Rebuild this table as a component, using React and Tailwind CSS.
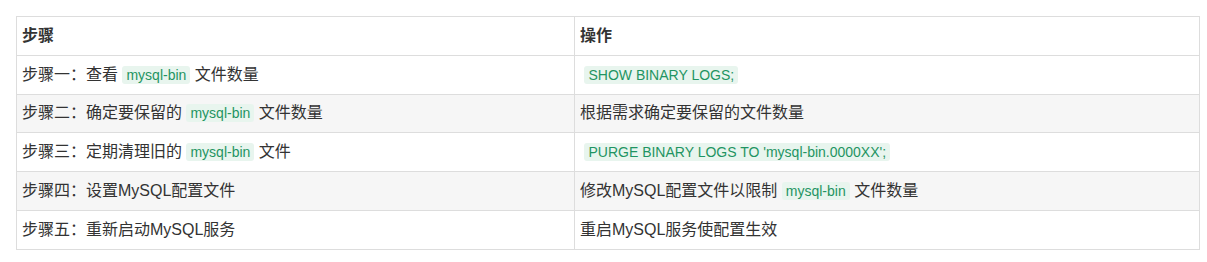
import React from "react";

const C = ({ children }) => (
  <code className="rounded-[3px] bg-[#e8f5ee] px-[4px] py-[1px] text-[14px] text-[#1f9462] [font-family:'Liberation_Sans',Arial,sans-serif]">
    {children}
  </code>
);

const rows = [
  [<>步骤一：查看 <C>mysql-bin</C> 文件数量</>, <> <C>SHOW BINARY LOGS;</C></>],
  [<>步骤二：确定要保留的 <C>mysql-bin</C> 文件数量</>, <>根据需求确定要保留的文件数量</>],
  [<>步骤三：定期清理旧的 <C>mysql-bin</C> 文件</>, <> <C>PURGE BINARY LOGS TO 'mysql-bin.0000XX';</C></>],
  [<>步骤四：设置MySQL配置文件</>, <>修改MySQL配置文件以限制 <C>mysql-bin</C> 文件数量</>],
  [<>步骤五：重新启动MySQL服务</>, <>重启MySQL服务使配置生效</>],
];

export default function App() {
  return (
    <div className="h-[262px] w-[1207px] bg-white pl-[16px] pt-[16px] [font-family:'Liberation_Sans','Noto_Sans_CJK_SC',sans-serif] text-[16px] text-[#333]">
      <table className="w-[1184px] table-fixed border-collapse">
        <colgroup>
          <col className="w-[558px]" />
          <col />
        </colgroup>
        <thead>
          <tr className="h-[38.8px]">
            <th className="border border-[#ddd] px-[5px] text-left font-bold">步骤</th>
            <th className="border border-[#ddd] px-[5px] text-left font-bold">操作</th>
          </tr>
        </thead>
        <tbody>
          {rows.map((r, i) => (
            <tr key={i} className={i % 2 === 1 ? "h-[38.8px] bg-[#f6f6f6]" : "h-[38.8px] bg-white"}>
              <td className="border border-[#ddd] px-[5px] whitespace-pre">{r[0]}</td>
              <td className="border border-[#ddd] px-[5px] whitespace-pre">{r[1]}</td>
            </tr>
          ))}
        </tbody>
      </table>
    </div>
  );
}
